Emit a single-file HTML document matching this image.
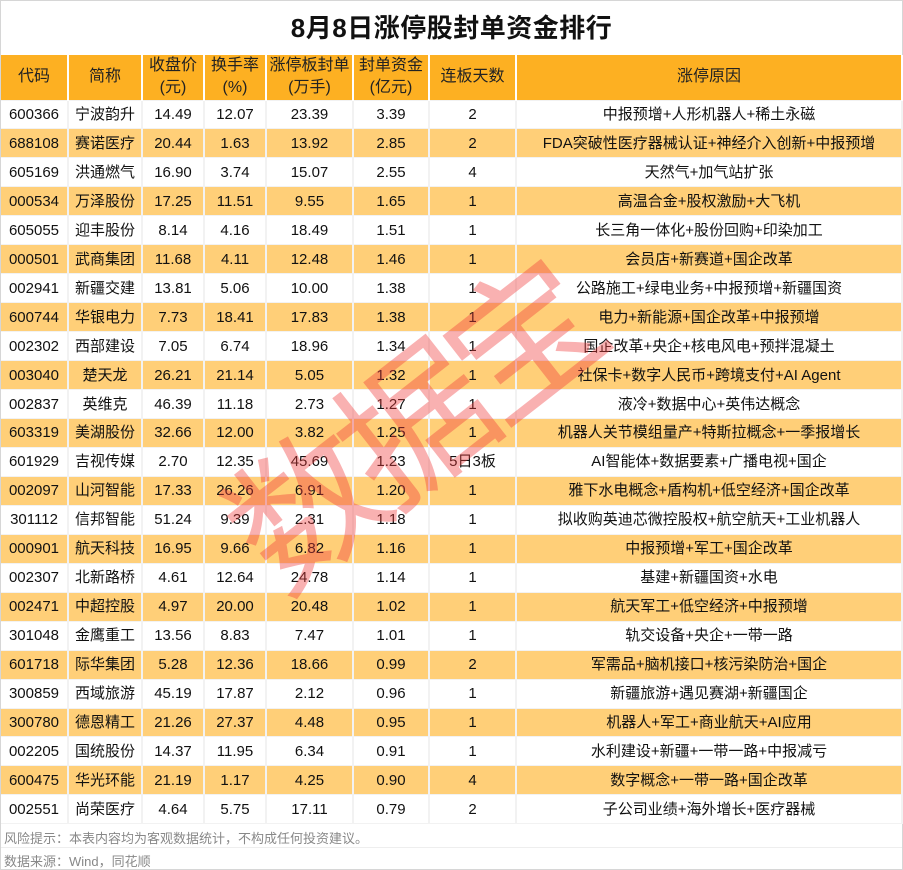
<!DOCTYPE html>
<html><head><meta charset="utf-8"><style>
*{margin:0;padding:0;box-sizing:border-box}
body{width:903px;height:870px;background:#fff;position:relative;overflow:hidden;font-family:"Liberation Sans","Noto Sans CJK SC",sans-serif;color:#111}
.frame{position:absolute;left:0;top:0;width:903px;height:870px;border:1px solid #d6d6d6}
h1{position:absolute;top:8px;left:0;width:903px;text-align:center;font-size:26px;font-weight:bold;letter-spacing:0.5px}
table{position:absolute;top:55px;left:1px;border-collapse:collapse;table-layout:fixed;width:902px}
td{text-align:center;font-size:15px;height:28.96px;border-right:2px solid #f2f2f2;border-bottom:1px solid #f2f2f2;padding:0;white-space:nowrap;line-height:1;color:#111}
tr.h td{background:#fdb022;height:45px;font-size:16px;line-height:22px;border-right:2px solid #fff;color:#222}
tr:nth-child(odd):not(.h) td{background:#ffcf78}
.f{position:absolute;left:4px;font-size:13px;color:#888}
.wm{position:absolute;left:405px;top:420px;font-size:150px;line-height:1;color:rgba(240,60,60,0.4);transform:translate(-50%,-50%) rotate(-38deg);font-family:"Noto Sans CJK SC",sans-serif;font-weight:400;letter-spacing:-12px;white-space:nowrap}
</style></head><body>
<div class="frame"></div>
<h1>8月8日涨停股封单资金排行</h1>
<table>
<colgroup><col style="width:67px"><col style="width:74px"><col style="width:62px"><col style="width:62px"><col style="width:87px"><col style="width:76px"><col style="width:87px"><col></colgroup>
<tr class="h"><td>代码</td><td>简称</td><td>收盘价<br>(元)</td><td>换手率<br>(%)</td><td>涨停板封单<br>(万手)</td><td>封单资金<br>(亿元)</td><td>连板天数</td><td>涨停原因</td></tr>
<tr><td>600366</td><td>宁波韵升</td><td>14.49</td><td>12.07</td><td>23.39</td><td>3.39</td><td>2</td><td>中报预增+人形机器人+稀土永磁</td></tr>
<tr><td>688108</td><td>赛诺医疗</td><td>20.44</td><td>1.63</td><td>13.92</td><td>2.85</td><td>2</td><td>FDA突破性医疗器械认证+神经介入创新+中报预增</td></tr>
<tr><td>605169</td><td>洪通燃气</td><td>16.90</td><td>3.74</td><td>15.07</td><td>2.55</td><td>4</td><td>天然气+加气站扩张</td></tr>
<tr><td>000534</td><td>万泽股份</td><td>17.25</td><td>11.51</td><td>9.55</td><td>1.65</td><td>1</td><td>高温合金+股权激励+大飞机</td></tr>
<tr><td>605055</td><td>迎丰股份</td><td>8.14</td><td>4.16</td><td>18.49</td><td>1.51</td><td>1</td><td>长三角一体化+股份回购+印染加工</td></tr>
<tr><td>000501</td><td>武商集团</td><td>11.68</td><td>4.11</td><td>12.48</td><td>1.46</td><td>1</td><td>会员店+新赛道+国企改革</td></tr>
<tr><td>002941</td><td>新疆交建</td><td>13.81</td><td>5.06</td><td>10.00</td><td>1.38</td><td>1</td><td>公路施工+绿电业务+中报预增+新疆国资</td></tr>
<tr><td>600744</td><td>华银电力</td><td>7.73</td><td>18.41</td><td>17.83</td><td>1.38</td><td>1</td><td>电力+新能源+国企改革+中报预增</td></tr>
<tr><td>002302</td><td>西部建设</td><td>7.05</td><td>6.74</td><td>18.96</td><td>1.34</td><td>1</td><td>国企改革+央企+核电风电+预拌混凝土</td></tr>
<tr><td>003040</td><td>楚天龙</td><td>26.21</td><td>21.14</td><td>5.05</td><td>1.32</td><td>1</td><td>社保卡+数字人民币+跨境支付+AI Agent</td></tr>
<tr><td>002837</td><td>英维克</td><td>46.39</td><td>11.18</td><td>2.73</td><td>1.27</td><td>1</td><td>液冷+数据中心+英伟达概念</td></tr>
<tr><td>603319</td><td>美湖股份</td><td>32.66</td><td>12.00</td><td>3.82</td><td>1.25</td><td>1</td><td>机器人关节模组量产+特斯拉概念+一季报增长</td></tr>
<tr><td>601929</td><td>吉视传媒</td><td>2.70</td><td>12.35</td><td>45.69</td><td>1.23</td><td>5日3板</td><td>AI智能体+数据要素+广播电视+国企</td></tr>
<tr><td>002097</td><td>山河智能</td><td>17.33</td><td>26.26</td><td>6.91</td><td>1.20</td><td>1</td><td>雅下水电概念+盾构机+低空经济+国企改革</td></tr>
<tr><td>301112</td><td>信邦智能</td><td>51.24</td><td>9.39</td><td>2.31</td><td>1.18</td><td>1</td><td>拟收购英迪芯微控股权+航空航天+工业机器人</td></tr>
<tr><td>000901</td><td>航天科技</td><td>16.95</td><td>9.66</td><td>6.82</td><td>1.16</td><td>1</td><td>中报预增+军工+国企改革</td></tr>
<tr><td>002307</td><td>北新路桥</td><td>4.61</td><td>12.64</td><td>24.78</td><td>1.14</td><td>1</td><td>基建+新疆国资+水电</td></tr>
<tr><td>002471</td><td>中超控股</td><td>4.97</td><td>20.00</td><td>20.48</td><td>1.02</td><td>1</td><td>航天军工+低空经济+中报预增</td></tr>
<tr><td>301048</td><td>金鹰重工</td><td>13.56</td><td>8.83</td><td>7.47</td><td>1.01</td><td>1</td><td>轨交设备+央企+一带一路</td></tr>
<tr><td>601718</td><td>际华集团</td><td>5.28</td><td>12.36</td><td>18.66</td><td>0.99</td><td>2</td><td>军需品+脑机接口+核污染防治+国企</td></tr>
<tr><td>300859</td><td>西域旅游</td><td>45.19</td><td>17.87</td><td>2.12</td><td>0.96</td><td>1</td><td>新疆旅游+遇见赛湖+新疆国企</td></tr>
<tr><td>300780</td><td>德恩精工</td><td>21.26</td><td>27.37</td><td>4.48</td><td>0.95</td><td>1</td><td>机器人+军工+商业航天+AI应用</td></tr>
<tr><td>002205</td><td>国统股份</td><td>14.37</td><td>11.95</td><td>6.34</td><td>0.91</td><td>1</td><td>水利建设+新疆+一带一路+中报减亏</td></tr>
<tr><td>600475</td><td>华光环能</td><td>21.19</td><td>1.17</td><td>4.25</td><td>0.90</td><td>4</td><td>数字概念+一带一路+国企改革</td></tr>
<tr><td>002551</td><td>尚荣医疗</td><td>4.64</td><td>5.75</td><td>17.11</td><td>0.79</td><td>2</td><td>子公司业绩+海外增长+医疗器械</td></tr>
</table>
<div class="f" style="top:828px">风险提示：本表内容均为客观数据统计，不构成任何投资建议。</div>
<div style="position:absolute;left:1px;top:847px;width:901px;border-top:1px solid #eee"></div>
<div class="f" style="top:851px">数据来源：Wind，同花顺</div>
<div class="wm">数据宝</div>
</body></html>
